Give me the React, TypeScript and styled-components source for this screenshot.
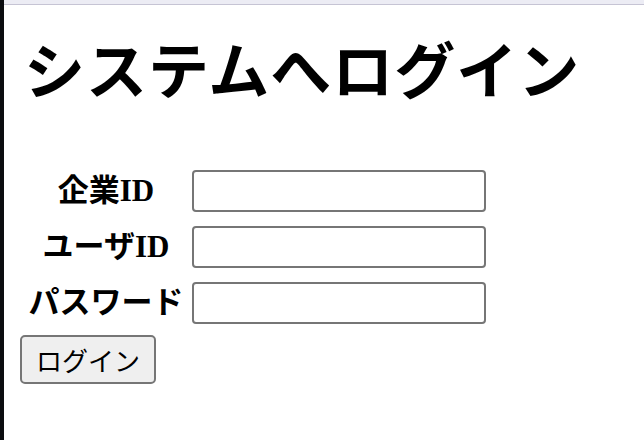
import React from 'react'
import styled, { createGlobalStyle } from 'styled-components'

const GlobalStyle = createGlobalStyle`
  html, body {
    margin: 0;
    padding: 0;
    background: #ffffff;
  }
  body {
    font-family: "Liberation Serif", "Noto Sans CJK JP", serif;
    color: #000000;
  }
`

const Frame = styled.div`
  min-height: 440px;
  box-sizing: border-box;
  border-left: 4px solid #0b0d10;
  display: flex;
  flex-direction: column;
`

const TopBand = styled.div`
  height: 4px;
  background: #ececf4;
  border-bottom: 1px solid #c6c4d4;
`

const Content = styled.main`
  padding: 0 16px;
`

const Title = styled.h1`
  margin: 29px 0 0;
  padding-left: 4px;
  font-size: 61px;
  line-height: 80px;
  font-weight: 700;
  font-family: "Liberation Serif", "Noto Sans CJK JP", serif;
  letter-spacing: 1px;
`

const Form = styled.form`
  margin-top: 56px;
  display: flex;
  flex-direction: column;
  align-items: flex-start;
`

const Fields = styled.div`
  display: grid;
  grid-template-columns: 172px 294px;
  row-gap: 14px;
  align-items: center;
`

const Label = styled.label`
  text-align: center;
  font-size: 31px;
  font-weight: 700;
  line-height: 42px;
  white-space: nowrap;
`

const Input = styled.input`
  box-sizing: border-box;
  width: 294px;
  height: 42px;
  border: 2px solid #767676;
  border-radius: 4px;
  padding: 2px 4px;
  font-size: 20px;
  background: #ffffff;
  outline: none;
`

const Button = styled.button`
  margin-top: 11px;
  box-sizing: border-box;
  width: 136px;
  height: 49px;
  border: 2px solid #767676;
  border-radius: 5px;
  background: #efefef;
  color: #000000;
  font-family: "Noto Sans CJK JP", "Noto Sans", sans-serif;
  font-size: 26px;
  padding: 0;
  cursor: pointer;
`

const fields = [
  { id: 'company', label: '企業ID', type: 'text' },
  { id: 'user', label: 'ユーザID', type: 'text' },
  { id: 'password', label: 'パスワード', type: 'password' },
]

export default function App() {
  return (
    <>
      <GlobalStyle />
      <Frame>
        <TopBand />
        <Content>
          <Title>システムへログイン</Title>
          <Form onSubmit={e => e.preventDefault()}>
            <Fields>
              {fields.map(f => (
                <React.Fragment key={f.id}>
                  <Label htmlFor={f.id}>{f.label}</Label>
                  <Input id={f.id} type={f.type} />
                </React.Fragment>
              ))}
            </Fields>
            <Button type="submit">ログイン</Button>
          </Form>
        </Content>
      </Frame>
    </>
  )
}
